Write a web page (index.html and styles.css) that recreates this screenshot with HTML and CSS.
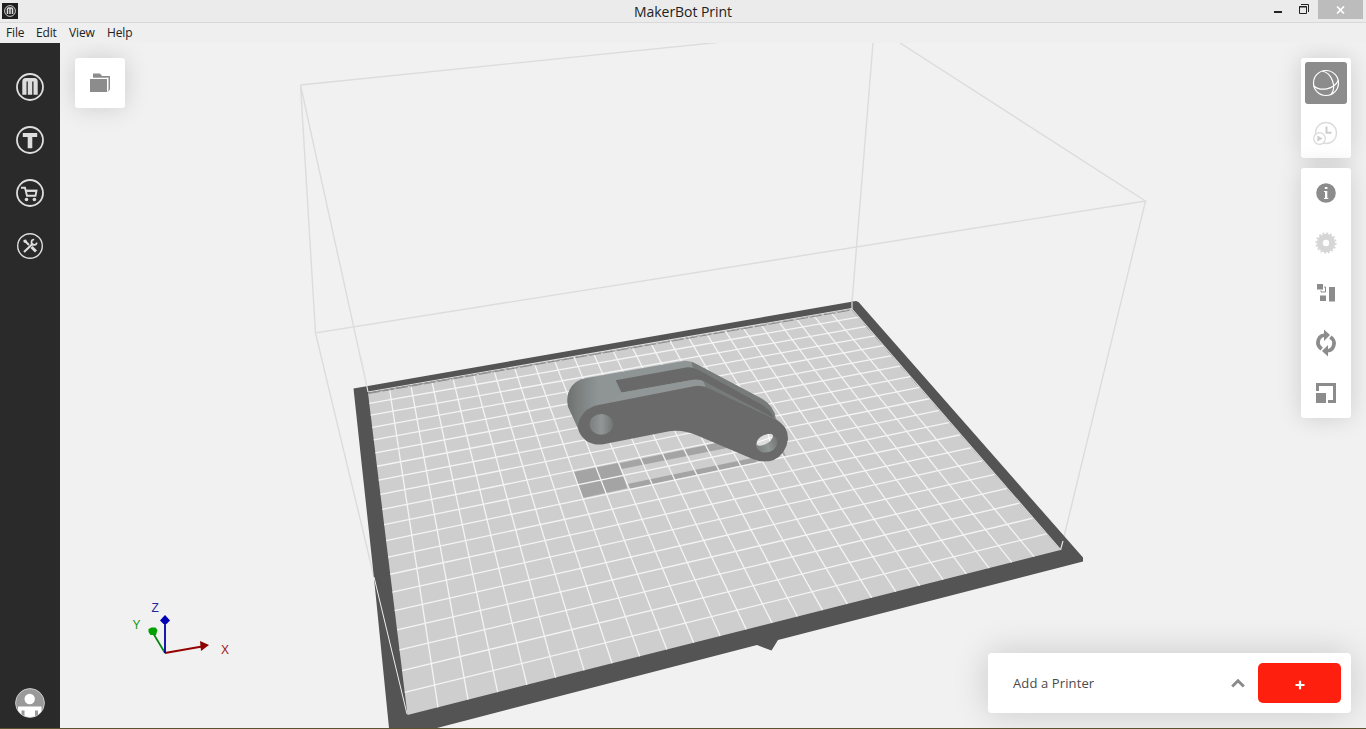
FILE: index.html
```html
<!DOCTYPE html>
<html lang="en">
<head>
<meta charset="utf-8">
<title>MakerBot Print</title>
<link rel="stylesheet" href="styles.css">
</head>
<body>
<div class="window">
  <header class="titlebar">
    <svg class="app-icon" width="16" height="16" viewBox="0 0 16 16"><rect width="16" height="16" fill="#1f1f1f"/><circle cx="8" cy="8" r="5.400" fill="none" stroke="#ccc"/><path d="M5.500 11V6q0-.9 1-.9h3q1 0 1 .9V11M8 5.500V11" fill="none" stroke="#ddd" stroke-width="1.500"/></svg>
    <h1 class="title">MakerBot Print</h1>
    <div class="controls">
      <svg class="ctl" width="26" height="19" viewBox="0 0 26 19"><rect x="8" y="11" width="8" height="2" fill="#222"/></svg>
      <svg class="ctl" width="26" height="19" viewBox="0 0 26 19"><path d="M7.500 6.500h7v7h-7zM7 7h8M9 4.500h7.500V12" fill="none" stroke="#222"/></svg>
      <div class="close"><svg width="9" height="8" viewBox="0 0 9 8"><path d="M1 .5l7 7M8 .5l-7 7" stroke="#fff" stroke-width="1.700"/></svg></div>
    </div>
  </header>
  <nav class="menubar"><span class="m-file">File</span><span class="m-edit">Edit</span><span class="m-view">View</span><span class="m-help">Help</span></nav>
  <main class="workspace">
    <aside class="sidebar">
      <div class="nav">
        <svg width="28" height="28" viewBox="0 0 28 28"><circle cx="14" cy="14" r="13" fill="none" stroke="#dedede" stroke-width="1.800"/><path d="M6.300 21.700V8.500Q6.300 5 9.800 5h8.400q3.500 0 3.500 3.500v13.200h-4.200V9q0-.7-.6-.7T16.200 9v12.700h-4.400V9q0-.7-.65-.7T10.500 9v12.700z" fill="#dedede"/></svg>
        <svg width="28" height="28" viewBox="0 0 28 28"><circle cx="14" cy="14" r="13" fill="none" stroke="#dedede" stroke-width="1.800"/><path d="M6.800 7h14.400v3.900h-4.900v11.300h-4.600V10.900H6.800z" fill="#dedede"/></svg>
        <svg width="28" height="28" viewBox="0 0 28 28"><circle cx="14" cy="14" r="13" fill="none" stroke="#dedede" stroke-width="1.800"/><path d="M5 8.700h4l2 8h8.500l1-5H10" fill="none" stroke="#dedede" stroke-width="1.900"/><path d="M10 10.800h11v2H10z" fill="#dedede"/><circle cx="10.500" cy="20.500" r="1.800" fill="#dedede"/><circle cx="18.400" cy="20.500" r="1.800" fill="#dedede"/></svg>
        <svg width="28" height="28" viewBox="0 0 28 28"><circle cx="14" cy="14" r="12.300" fill="none" stroke="#dedede" stroke-width="1.400"/><path d="M8.500 8.500l4.500 4.500M8 20l9-8.500" stroke="#dedede" stroke-width="2.100"/><path d="M15.500 15l4.500 4.500" stroke="#dedede" stroke-width="3"/><path d="M7.500 8l2.500-.5 1 2-2 1.500-1.500-1z" fill="#dedede"/><path d="M18.200 7.500a2.700 2.700 0 1 0 2.600 3.200" fill="none" stroke="#dedede" stroke-width="1.700"/></svg>
      </div>
      <svg class="avatar" width="30" height="30" viewBox="0 0 30 30"><defs><clipPath id="face"><circle cx="15" cy="15" r="14"/></clipPath></defs><circle cx="15" cy="15" r="14.400" fill="#999" stroke="#c8c8c8"/><g clip-path="url(#face)"><circle cx="14.700" cy="11" r="5.200" fill="#fff"/><path d="M3 18.500h23.500V30H3z" fill="#fff"/><path d="M6.500 22.500h3V30h-3zM20 22.500h3V30h-3z" fill="#999"/></g></svg>
    </aside>
    <section class="viewport">
      <svg class="scene" width="1306" height="685" viewBox="60 43 1306 685">
        <defs>
          <linearGradient id="round" x1="80" x2="175" y1="0" y2="0" gradientUnits="userSpaceOnUse"><stop offset="0" stop-color="#6c7070"/><stop offset=".35" stop-color="#7b807f"/><stop offset="1" stop-color="#8e9594"/></linearGradient>
          <linearGradient id="bore"><stop offset="0" stop-color="#7b7f7e"/><stop offset=".5" stop-color="#909796"/><stop offset="1" stop-color="#727675"/></linearGradient>
        </defs>
        <path d="M300.500 85L722 42M300.500 85L315.500 333L1145.500 201L900 43M873 43L851.500 309M300.500 85L368 392M315.500 333L374 577M1145.500 201L1061 549" fill="none" stroke="#dcdcdc" stroke-width="1.400"/>
        <path d="M353.500 388.500L856 301L858.500 302L1083 557.500V561.500L778 640L771.500 650.500L757 645L437 728H389L374 578z" fill="#545454"/>
        <path d="M368 393L851.500 309L1060.500 550L407.500 715z" fill="#cecece"/>
        <g transform="translate(540 340) scale(.33333)" fill="#a4a4a4">
          <path d="M101 396L235 369L262 445L128 474z"/>
          <path d="M238 370L530 309L565 323L245 387zM262 432L640 353L652 366L268 446zM725 338L732 335L737 348L728 349z"/>
        </g>
        <path id="grid" fill="none" stroke="#f4f4f4" stroke-width="1.300"/>
        <path d="M368.500 393.500L851.500 310" stroke="#777" stroke-width=".8" stroke-dasharray="12 2"/>
        <path d="M852 310L1060 549" stroke="#888" stroke-width=".8" stroke-dasharray="9 9"/>
        <path d="M368 392L851.500 308.500L1060.500 549.500" fill="none" stroke="#dedede" stroke-width="1.100"/>
        <path d="M361 357L368 392M852 302V309M1063 541L1060.500 550" fill="none" stroke="#e2e2e2" stroke-width="1.200"/>
        <path d="M374 577L407 714" fill="none" stroke="#eee"/>
        <g transform="translate(540 340) scale(.33333)">
          <path d="M115 268L84 200Q74 153 108 126Q120 117 140 114L430 63Q450 60 470 73L660 173Q702 197 707 235L735 265L500 240L200 290z" fill="url(#round)"/>
          <path d="M455 65Q463 68 470 73L660 173Q702 197 707 235L690 230Q680 205 655 190L480 92L458 82z" fill="#777b7a"/>
          <path d="M227 121L430 84Q455 78 478 91L655 188Q695 208 703 238L500 133L460 119L245 158z" fill="#696969"/>
          <path d="M240 158L455 120Q478 116 495 126L535 150L560 180L200 200z" fill="#909796"/>
          <path d="M490 123L707 237Q735 255 742 280L520 165L497 141z" fill="#777b7a"/>
          <path d="M195 191L462 139Q485 134 510 147L707 239Q745 258 744 298Q738 343 700 361Q670 370 640 358L470 286Q425 266 380 275L190 313Q139 319 117 275Q106 242 139 211Q160 195 195 191z" fill="#6a6a6a"/>
          <ellipse cx="184" cy="253" rx="35" ry="31" fill="url(#bore)"/>
          <ellipse cx="680" cy="310" rx="33" ry="27" fill="url(#bore)" transform="rotate(-20 680 310)"/>
          <path d="M650 314Q648 297 672 286Q695 276 699 286Q698 302 679 311Q658 321 650 314z" fill="#dedede"/>
          <path d="M684 282L690 304M652 307L698 291" stroke="#fff" stroke-width="3"/>
        </g>
        <g class="axes">
          <path d="M165 653L153 633" stroke="#00850c" stroke-width="1.700"/><path d="M148.500 629l3-1.500h4l2 2.500-1.500 5h-5.500l-2-3z" fill="#00a000"/>
          <path d="M165 653L202 646.500" stroke="#960000" stroke-width="1.900"/><path d="M200 641l9 4-8 6z" fill="#8b0000"/>
          <path d="M165 653V622" stroke="#0000a8" stroke-width="1.800"/><path d="M165 615l5 5.500-3.500 3.500h-3L160 620.500z" fill="#0000b4"/>
          <text x="151.500" y="612" fill="#25259b">Z</text><text x="132.500" y="629" fill="#159515">Y</text><text x="221" y="654" fill="#a01818">X</text>
        </g>
      </svg>
      <div class="overlay">
        <button class="card folder"><svg width="20" height="20" viewBox="0 0 20 20"><path d="M3 .5h7L12 3h8v13.500l-2.500 2.500V5H3z" fill="#8c8c8c"/><path d="M0 4.800h17.200V4.400h1.300V17l-1.500 2H0z" fill="#fff"/><path d="M0 6h17v13H0z" fill="#8c8c8c"/></svg></button>
        <div class="tools">
          <div class="card modes">
            <div class="mode active"><svg width="28" height="28" viewBox="0 0 28 28" fill="none" stroke="#fff" stroke-width="1.200"><circle cx="14" cy="14" r="12.500"/><path d="M10 2C20 4 25 18 19 25.500M1.800 17C8 22.500 22 21 26.500 11"/></svg></div>
            <div class="mode"><svg width="26" height="26" viewBox="0 0 26 26"><circle cx="13" cy="13" r="10.500" fill="none" stroke="#dcdcdc" stroke-width="1.400"/><path d="M13.500 6.500v6.300h5" fill="none" stroke="#cecece" stroke-width="2"/><circle cx="6.500" cy="18.600" r="5.800" fill="#fff" stroke="#dcdcdc" stroke-width="1.400"/><path d="M4.300 15.500l5.400 3-5.400 3z" fill="#cecece"/></svg></div>
          </div>
          <div class="card actions">
            <div class="action"><svg width="20" height="20" viewBox="0 0 20 20"><circle cx="10" cy="10" r="9.800" fill="#8c8c8c"/><path d="M8.800 4h2.600v2H8.800zM8 8h3.300v7h1v1H8v-1h1V9H8z" fill="#fff"/></svg></div>
            <div class="action"><svg width="22" height="22" viewBox="0 0 22 22"><circle cx="11" cy="11" r="6.200" fill="none" stroke="#d6d6d6" stroke-width="6"/><circle cx="11" cy="11" r="9.800" fill="none" stroke="#d6d6d6" stroke-width="1.600" stroke-dasharray="1.900 1.948"/></svg></div>
            <div class="action"><svg width="18" height="18" viewBox="0 0 18 18"><path d="M0 0h6v5.500H0zM3 11.500h6V17H3zM12 3h6v14.500h-6z" fill="#8c8c8c"/><path d="M7 3h1.500v5H4V6.500" fill="none" stroke="#8c8c8c"/></svg></div>
            <div class="action"><svg width="20" height="28" viewBox="0 0 20 28" fill="#8c8c8c"><path d="M4.500 21.500Q0 18 0 13.500Q1 5 8 4.500V.5l6 5.500-6 6V8Q4 9 3.800 14q0 2.500 3 4.500zM15.500 6.500Q20 10 20 14.500Q19 23 12 23.500v4L6 22l6-6v4q4-1 4.200-6 0-2.500-3-4.500z"/></svg></div>
            <div class="action"><svg width="20" height="20" viewBox="0 0 20 20"><path d="M0 10h10v10H0zM0 0h20v20h-8v-3h5V3H3v5H0z" fill="#8c8c8c"/></svg></div>
          </div>
        </div>
      </div>
      <div class="card printer">
        <span class="printer-label">Add a Printer</span>
        <svg class="chevron" width="14" height="10" viewBox="0 0 14 10"><path d="M1.200 8.500L7 2.700l5.800 5.800" fill="none" stroke="#8a8a8a" stroke-width="2.900"/></svg>
        <button class="add"><svg width="10" height="10" viewBox="0 0 10 10"><path d="M5 .7v8.600M.5 5h9" stroke="#fff" stroke-width="2.200"/></svg></button>
      </div>
    </section>
  </main>
  <footer class="edge"></footer>
</div>
<script src="grid.js"></script>
</body>
</html>
```
FILE: styles.css
```css
* { box-sizing: border-box; }
body { margin: 0; overflow: hidden; font-family: "Open Sans", "Noto Sans", sans-serif; color: #222; }
.window { display: flex; flex-direction: column; width: 1366px; height: 729px; background: #f1f1f1; }
.titlebar { display: grid; grid-template-columns: 1fr auto 1fr; height: 23px; background: #ebebeb; border-bottom: 1px solid #d9d9d9; }
.app-icon { margin: 3px 0 0 2px; }
.title { margin: 0; font-size: 14px; line-height: 23px; font-weight: 400; letter-spacing: -.05px; }
.controls { display: flex; justify-content: flex-end; padding-right: 3px; }
.close { display: flex; align-items: center; justify-content: center; width: 45px; height: 19px; background: #bcbcbc; }
.menubar { display: flex; height: 20px; padding-left: 6px; background: #efefef; font-size: 12px; line-height: 20px; letter-spacing: -.15px; }
.m-file { width: 30px; }
.m-edit { width: 33px; }
.m-view { width: 38px; }
.workspace { display: flex; height: 685px; }
.sidebar { display: flex; flex-direction: column; justify-content: space-between; align-items: center; width: 60px; padding: 30px 0 10px; background: #2a2a2a; }
.nav { display: flex; flex-direction: column; gap: 25px; }
.viewport { position: relative; flex: 1; overflow: hidden; }
.scene { display: block; }
.axes { font-family: "Liberation Sans", sans-serif; font-size: 12px; }
.overlay { position: absolute; inset: 15px 15px auto; display: flex; justify-content: space-between; align-items: flex-start; }
.card { background: #fff; border: 0; border-radius: 3px; box-shadow: 0 0 25px rgba(0, 0, 0, .15); }
.folder { display: flex; align-items: center; justify-content: center; width: 50px; height: 50px; padding: 0; }
.tools { display: flex; flex-direction: column; gap: 10px; width: 50px; }
.modes { height: 100px; padding: 4px; }
.mode { display: flex; align-items: center; justify-content: center; height: 42px; border-radius: 3px; }
.mode + .mode { margin-top: 8px; }
.active { background: #8c8c8c; }
.actions { display: grid; grid-auto-rows: 50px; }
.action { display: flex; align-items: center; justify-content: center; }
.printer { position: absolute; right: 15px; bottom: 15px; display: flex; align-items: center; width: 363px; height: 60px; padding: 0 10px 0 25px; border-radius: 4px; box-shadow: 0 0 35px rgba(0, 0, 0, .17); }
.printer-label { flex: 1; font-size: 13px; letter-spacing: .12px; color: #4a4a4a; }
.chevron { margin-right: 13px; }
.add { display: flex; align-items: center; justify-content: center; width: 83px; height: 40px; padding: 3px 0 0; border: 0; border-radius: 5px; background: #ff1f0f; }
.edge { height: 1px; background: #5a532f; }
```
FILE: grid.js
```js
// Projects the 25.2 x 19.9 cm build plate onto the scene.
const W = 25.2, D = 19.9;
const [p0, p1, p2, p3] = [[407.5, 715], [1060.5, 550], [851.5, 309], [368, 393]];
const dx1 = p1[0] - p2[0], dx2 = p3[0] - p2[0], dx3 = p0[0] - p1[0] + p2[0] - p3[0];
const dy1 = p1[1] - p2[1], dy2 = p3[1] - p2[1], dy3 = p0[1] - p1[1] + p2[1] - p3[1];
const det = dx1 * dy2 - dx2 * dy1;
const g = (dx3 * dy2 - dx2 * dy3) / det;
const h = (dx1 * dy3 - dx3 * dy1) / det;
function project(x, y) {
  const u = x / W, v = y / D, w = 1 + g * u + h * v;
  const px = (p0[0] + (p1[0] - p0[0] + g * p1[0]) * u + (p3[0] - p0[0] + h * p3[0]) * v) / w;
  const py = (p0[1] + (p1[1] - p0[1] + g * p1[1]) * u + (p3[1] - p0[1] + h * p3[1]) * v) / w;
  return px.toFixed(2) + " " + py.toFixed(2);
}
let d = "";
for (let x = 1; x <= 24; x++) d += "M" + project(x, 0) + "L" + project(x, D);
for (let y = 1; y <= 19; y++) d += "M" + project(0, y) + "L" + project(W, y);
document.getElementById("grid").setAttribute("d", d);
```
